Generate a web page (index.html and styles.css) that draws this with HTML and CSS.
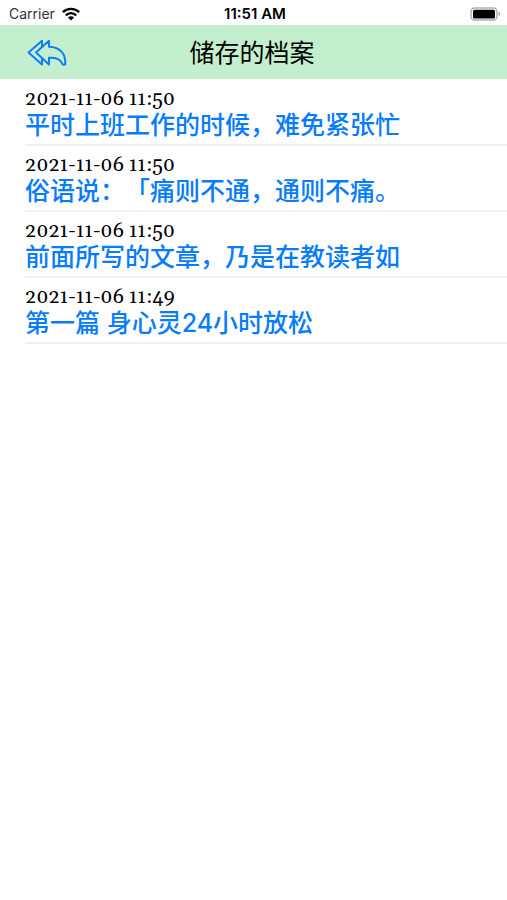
FILE: index.html
```html
<!DOCTYPE html>
<html lang="zh-CN">
<head>
<meta charset="utf-8">
<meta name="viewport" content="width=device-width, initial-scale=1">
<title>储存的档案</title>
<link rel="stylesheet" href="styles.css">
</head>
<body>
<div class="status">
  <div class="carrier">
    <span>Carrier</span>
    <svg class="wifi" viewBox="0 0 18 14" aria-hidden="true">
      <g fill="none" stroke="#000" stroke-width="2.4">
        <path d="M.9 5.2C5.4.7 12.600.7 17.100 5.200"/>
        <path d="M3.800 8.300c2.900-2.900 7.500-2.900 10.400 0"/>
      </g>
      <path d="M5.900 10.400c1.800-1.700 4.400-1.700 6.200 0L9 13.600z"/>
    </svg>
  </div>
  <time class="clock">11:51 AM</time>
  <svg class="battery" viewBox="0 0 31 14" aria-hidden="true">
    <rect x="1" y="1" width="26" height="12" rx="3.500" fill="#fff" stroke="#b0b0b0" stroke-width="1.500"/>
    <rect x="3" y="2.800" width="22" height="8.600" rx="1.500"/>
    <path d="M28.600 4.800c2.200.6 2.200 3.800 0 4.400z" fill="#a6a6a6"/>
  </svg>
</div>
<header class="navbar">
  <button class="back" type="button" aria-label="返回">
    <svg viewBox="0 0 40 28" aria-hidden="true">
      <g fill="none" stroke="#0f7df5" stroke-width="2" stroke-linejoin="round" stroke-linecap="round">
        <path d="M22 1.800 9 13.500 22 25.500v-6.700c7-.8 11.500.7 13.600 6.700h2.600C39 14.500 33 8 22 7.700z"/>
        <path d="M15 7.500V1.800L1.500 13.500 15 25.500v-5"/>
      </g>
    </svg>
  </button>
  <h1 class="title">储存的档案</h1>
</header>
<main>
  <ul class="files">
    <li class="file"><time class="date">2021-11-06 11:50</time><a class="name" href="#">平时上班工作的时候，难免紧张忙</a></li>
    <li class="file"><time class="date">2021-11-06 11:50</time><a class="name" href="#">俗语说：「痛则不通，通则不痛。</a></li>
    <li class="file"><time class="date">2021-11-06 11:50</time><a class="name" href="#">前面所写的文章，乃是在教读者如</a></li>
    <li class="file"><time class="date">2021-11-06 11:49</time><a class="name" href="#">第一篇 身心灵24小时放松</a></li>
  </ul>
</main>
</body>
</html>
```
FILE: styles.css
```css
* {
  box-sizing: border-box;
}

body {
  margin: 0;
  background: #fff;
  color: #000;
  font-family: Inter, "Noto Sans CJK SC", sans-serif;
  text-spacing-trim: space-all;
}

.status {
  display: grid;
  grid-template-columns: 1fr auto 1fr;
  align-items: center;
  height: 25px;
  padding: 2px 6px 0 9px;
  font-size: 14px;
}

.carrier {
  display: flex;
  align-items: center;
  gap: 7px;
  color: #333;
}

.wifi {
  width: 18px;
  height: 14px;
}

.clock {
  font-size: 15px;
  font-weight: 600;
  line-height: 18px;
}

.battery {
  width: 31px;
  height: 14px;
  justify-self: end;
}

.navbar {
  display: grid;
  grid-template-columns: 1fr auto 1fr;
  align-items: center;
  height: 54px;
  padding: 2px 30px 0 27px;
  background: #c3efce;
}

.back {
  display: flex;
  justify-self: start;
  padding: 0;
  border: 0;
  background: none;
}

.back svg {
  width: 40px;
  height: 28px;
}

.title {
  margin: 0;
  font-size: 25px;
  font-weight: 400;
  line-height: 36px;
}

.files {
  margin: 0;
  padding: 1px 0 0 25px;
  list-style: none;
}

.file {
  display: flex;
  flex-direction: column;
  padding: 9px 0 4px;
  border-bottom: 2px solid #f0f0f0;
}

.date {
  font-family: Georgia, Gelasio, "Liberation Serif", serif;
  font-size: 20px;
  line-height: 21px;
}

.name {
  color: #087cff;
  font-size: 25px;
  font-weight: 500;
  line-height: 30px;
  text-decoration: none;
}
```
